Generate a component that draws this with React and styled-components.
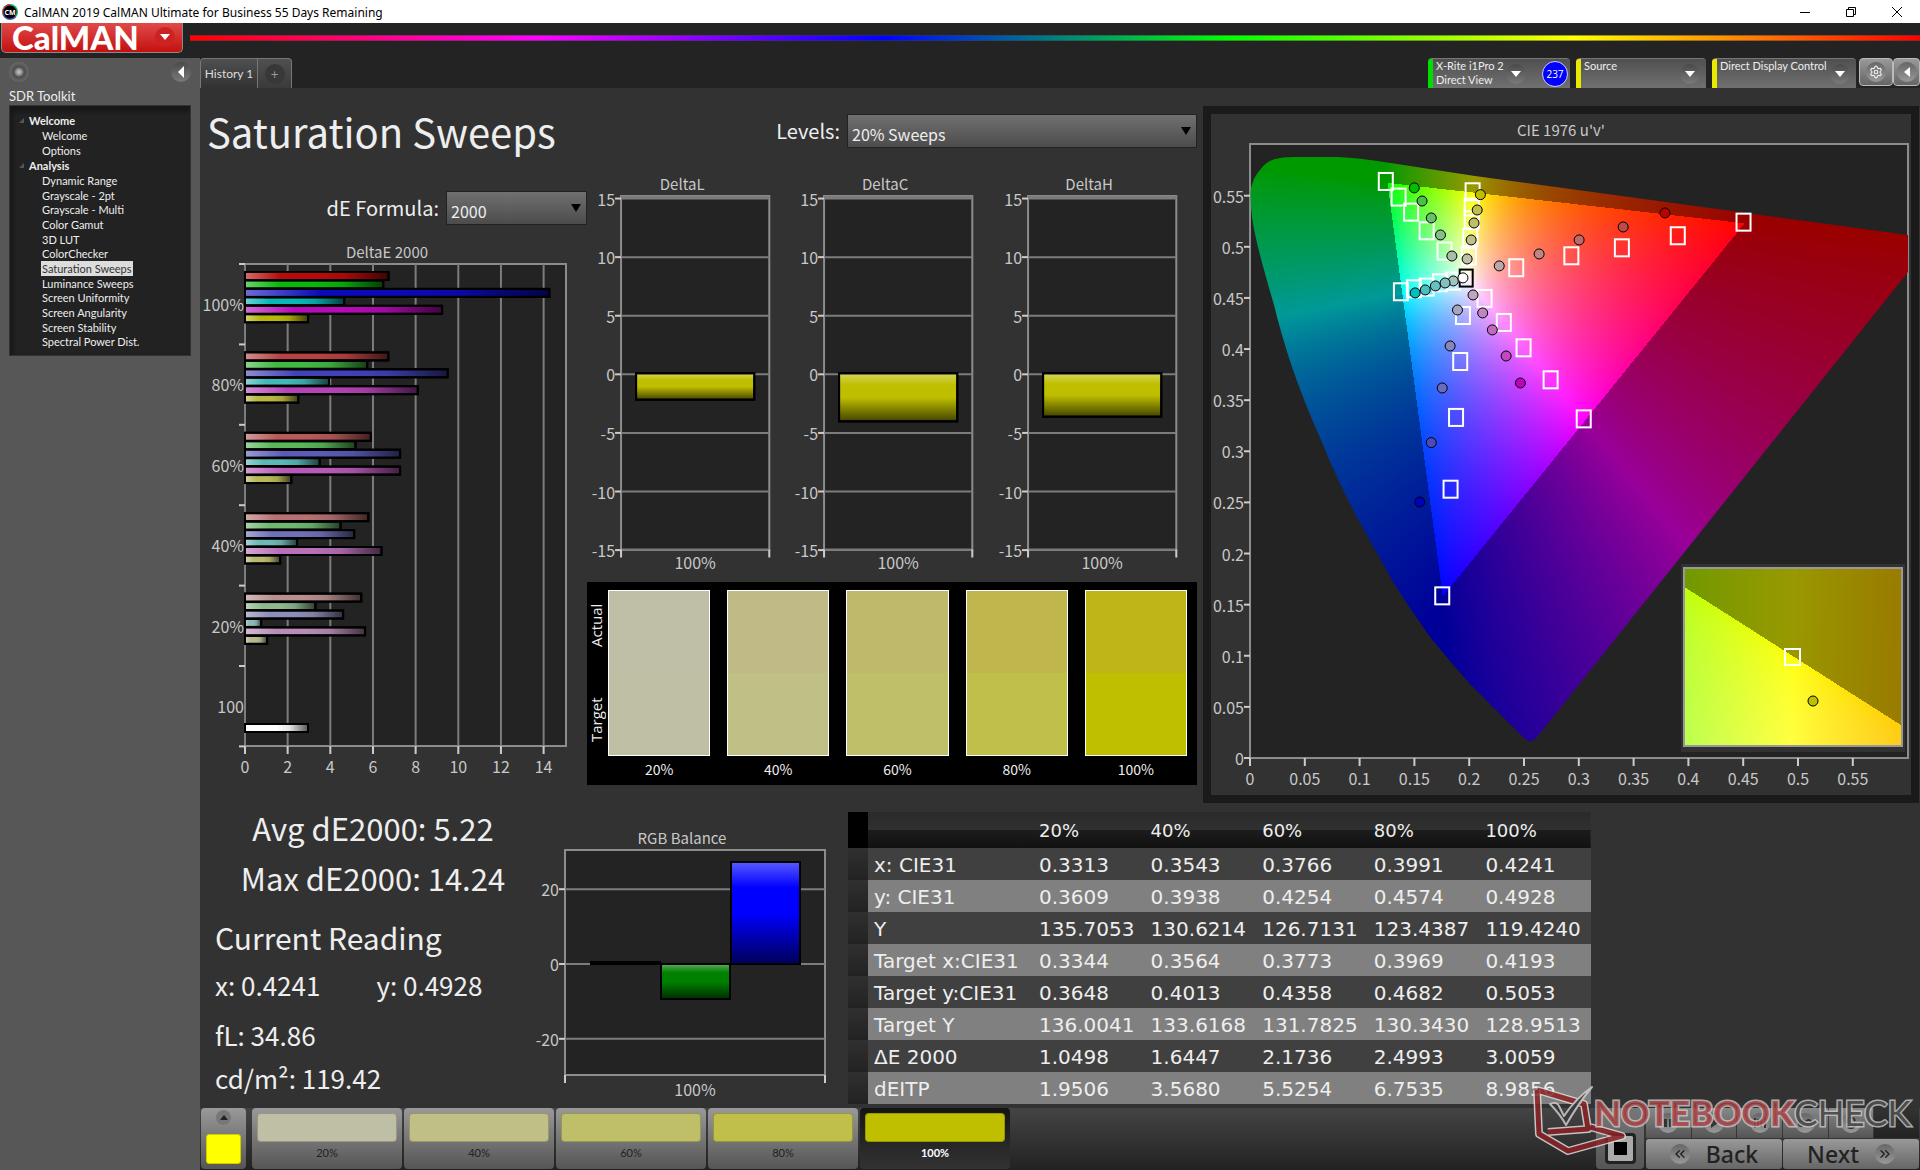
import React, { useEffect, useRef, useState } from "react";
import styled, { createGlobalStyle, css } from "styled-components";
import { Settings, ChevronsLeft, ChevronsRight } from "lucide-react";

const narrow = `"Noto Sans CJK SC", sans-serif`;

const treeData = [
  { title: "Welcome", items: ["Welcome", "Options"] },
  {
    title: "Analysis",
    items: [
      "Dynamic Range",
      "Grayscale - 2pt",
      "Grayscale - Multi",
      "Color Gamut",
      "3D LUT",
      "ColorChecker",
      "Saturation Sweeps",
      "Luminance Sweeps",
      "Screen Uniformity",
      "Screen Angularity",
      "Screen Stability",
      "Spectral Power Dist.",
    ],
  },
];

// red, green, blue, cyan, magenta, yellow
const hues = [
  [1, 0, 0],
  [0, 1, 0],
  [0, 0, 1],
  [0, 1, 1],
  [1, 0, 1],
  [1, 1, 0],
];

const deltaE = [
  { label: "100%", low: 10, values: [6.73, 6.48, 14.27, 4.65, 9.24, 2.96] },
  { label: "80%", low: 66, values: [6.72, 5.73, 9.5, 3.94, 8.1, 2.5] },
  { label: "60%", low: 90, values: [5.9, 5.18, 7.27, 3.5, 7.27, 2.17] },
  { label: "40%", low: 112, values: [5.78, 4.48, 5.12, 2.44, 6.4, 1.65] },
  { label: "20%", low: 142, values: [5.45, 3.3, 4.6, 0.76, 5.63, 1.04] },
];

const deltas = [
  { title: "DeltaL", value: -2.25 },
  { title: "DeltaC", value: -4.1 },
  { title: "DeltaH", value: -3.7 },
];

const swatches = [
  { level: "20%", actual: "#bfbea6", target: "#bfbfa6" },
  { level: "40%", actual: "#bfba86", target: "#bfbf86" },
  { level: "60%", actual: "#bfb96c", target: "#bfbf6a" },
  { level: "80%", actual: "#bfb74d", target: "#bfbf4a" },
  { level: "100%", actual: "#bfb418", target: "#bfbf00" },
];

const tableRows = [
  ["x: CIE31", "0.3313", "0.3543", "0.3766", "0.3991", "0.4241"],
  ["y: CIE31", "0.3609", "0.3938", "0.4254", "0.4574", "0.4928"],
  ["Y", "135.7053", "130.6214", "126.7131", "123.4387", "119.4240"],
  ["Target x:CIE31", "0.3344", "0.3564", "0.3773", "0.3969", "0.4193"],
  ["Target y:CIE31", "0.3648", "0.4013", "0.4358", "0.4682", "0.5053"],
  ["Target Y", "136.0041", "133.6168", "131.7825", "130.3430", "128.9513"],
  ["ΔE 2000", "1.0498", "1.6447", "2.1736", "2.4993", "3.0059"],
  ["dEITP", "1.9506", "3.5680", "5.5254", "6.7535", "8.9856"],
];

// u'v' coordinates, 20% to 100% for each hue
const targets = [
  [[0.2429, 0.48], [0.2932, 0.4917], [0.3393, 0.4995], [0.3903, 0.5113], [0.4503, 0.5246]],
  [[0.1775, 0.4963], [0.1612, 0.5161], [0.147, 0.5344], [0.1356, 0.5491], [0.1239, 0.5644]],
  [[0.1943, 0.4333], [0.1918, 0.3883], [0.188, 0.3336], [0.183, 0.2634], [0.1754, 0.1591]],
  [[0.1855, 0.4669], [0.1733, 0.4653], [0.1612, 0.4611], [0.1495, 0.4594], [0.1377, 0.4565]],
  [[0.214, 0.45], [0.2316, 0.4265], [0.2496, 0.4017], [0.2743, 0.3704], [0.3045, 0.3322]],
  [[0.1997, 0.4914], [0.201, 0.5096], [0.2023, 0.5269], [0.2023, 0.5393], [0.2031, 0.5543]],
];

const readings = [
  [[0.2274, 0.4813], [0.2638, 0.493], [0.3003, 0.5067], [0.3405, 0.5194], [0.3786, 0.5331]],
  [[0.1842, 0.491], [0.1738, 0.5116], [0.1654, 0.5282], [0.157, 0.5448], [0.1499, 0.5576]],
  [[0.1893, 0.4382], [0.1826, 0.403], [0.1754, 0.3619], [0.1654, 0.3085], [0.1549, 0.2504]],
  [[0.1855, 0.4666], [0.178, 0.4646], [0.1692, 0.4617], [0.1599, 0.4578], [0.1507, 0.4549]],
  [[0.2035, 0.4529], [0.2123, 0.4353], [0.2211, 0.4187], [0.2337, 0.3932], [0.2467, 0.3668]],
  [[0.1981, 0.4881], [0.2018, 0.5067], [0.2044, 0.5233], [0.2073, 0.536], [0.2102, 0.551]],
];

const lows = [166, 134, 106, 74, 0];

const locus =
  "M274,594 L221,541 Q198,515 180,493 Q160,465 143,438 L108,375 Q88,338 71,296 Q54,258 42,223 Q31,190 24,161 Q12,120 7,99 Q-1,66 1,44 Q4,32 10,26 Q15,18 25,15 Q33,13 42,13 L88,13 Q110,14 134,18 L225,32 L658,91 L658,128 L287,593 Q280,601 274,594 Z";

const tint = (hue, low, high = 191) =>
  `rgb(${hue.map((c) => (c ? high : low)).join(",")})`;

// brightest displayable colour at a u'v' point, dimmed outside the gamut
const colorAt = (u, v, gamma) => {
  const x = (9 * u) / (4 * v);
  const z = (12 - 3 * u - 20 * v) / (4 * v);
  const rgb = [
    3.2406 * x - 1.5372 - 0.4986 * z,
    -0.9689 * x + 1.8758 + 0.0415 * z,
    0.0557 * x - 0.204 + 1.057 * z,
  ];
  const inside = Math.min(...rgb) >= 0;
  const clipped = rgb.map((c) => Math.max(c, 0));
  const max = Math.max(...clipped);
  return clipped.map((c) => Math.pow(c / max, gamma) * (inside ? 255 : 153));
};

const Chromaticity = ({ width, height, u0, v0, uScale, vScale, gamma, mask }) => {
  const ref = useRef(null);

  useEffect(() => {
    const ctx = ref.current.getContext("2d");
    const image = ctx.createImageData(width, height);
    for (let py = 0; py < height; py++) {
      for (let px = 0; px < width; px++) {
        const [r, g, b] = colorAt(u0 + px / uScale, v0 - py / vScale, gamma);
        const i = (py * width + px) * 4;
        image.data[i] = r;
        image.data[i + 1] = g;
        image.data[i + 2] = b;
        image.data[i + 3] = 255;
      }
    }
    ctx.putImageData(image, 0, 0);
    if (mask) {
      ctx.globalCompositeOperation = "destination-in";
      ctx.fill(new Path2D(mask));
    }
  }, [width, height, u0, v0, uScale, vScale, gamma, mask]);

  return <Canvas ref={ref} width={width} height={height} />;
};

const DeltaEChart = () => {
  const x0 = 45;
  const y0 = 24;
  const unit = 21.33;
  const group = 80.4;
  return (
    <Chart viewBox="0 0 387 550" role="img" aria-label="DeltaE 2000">
      <defs>
        <linearGradient id="shine">
          <stop offset="0" stopColor="#fff" stopOpacity="0.4" />
          <stop offset="0.25" stopColor="#fff" stopOpacity="0" />
          <stop offset="0.5" stopColor="#000" stopOpacity="0" />
          <stop offset="0.7" stopColor="#000" stopOpacity="0.1" />
          <stop offset="1" stopColor="#000" stopOpacity="0.65" />
        </linearGradient>
        <linearGradient id="shineDown" x2="0" y2="1">
          <stop offset="0" stopColor="#fff" stopOpacity="0.35" />
          <stop offset="0.25" stopColor="#fff" stopOpacity="0" />
          <stop offset="0.5" stopColor="#000" stopOpacity="0" />
          <stop offset="1" stopColor="#000" stopOpacity="0.65" />
        </linearGradient>
      </defs>
      <ChartTitle x="187" y="18" $middle>DeltaE 2000</ChartTitle>
      <Plot x={x0} y={y0} width="321" height="482" />
      {[0, 2, 4, 6, 8, 10, 12, 14].map((n) => (
        <g key={n}>
          <Grid d={`M${x0 + n * unit},${y0} v482`} />
          <Tick d={`M${x0 + n * unit},${y0 + 482} v8`} />
          <Label x={x0 + n * unit} y="533" $middle>{n}</Label>
        </g>
      ))}
      {[0, 1, 2, 3, 4, 5, 6].map((n) => (
        <Tick key={n} d={`M${x0},${y0 + n * group} h-6`} />
      ))}
      {deltaE.map((row, g) => (
        <g key={row.label}>
          <Label x={x0 - 1} y={y0 + g * group + 47} $end>{row.label}</Label>
          {row.values.map((value, i) => (
            <g key={i}>
              <Bar
                x={x0}
                y={y0 + g * group + 8 + i * 8.45}
                width={value * unit}
                height="8"
                fill={tint(hues[i], row.low, 184)}
              />
              <Bar
                x={x0}
                y={y0 + g * group + 8 + i * 8.45}
                width={value * unit}
                height="8"
                fill="url(#shine)"
              />
            </g>
          ))}
        </g>
      ))}
      <Label x={x0 - 1} y={y0 + 5 * group + 47} $end>100</Label>
      <Bar x={x0} y="484" width="63" height="8" fill="#fff" />
      <Bar x={x0} y="484" width="63" height="8" fill="url(#shine)" />
    </Chart>
  );
};

const DeltaChart = ({ title, value }) => {
  const zero = 203;
  return (
    <Chart viewBox="0 0 203 404" role="img" aria-label={title}>
      <ChartTitle x="95" y="19" $middle>{title}</ChartTitle>
      <Plot x="34" y="25" width="148" height="353" />
      <Grid d="M34,26 h148" />
      {[15, 10, 5, 0, -5, -10, -15].map((n) => (
        <g key={n}>
          <Grid d={`M34,${zero - n * 11.7} h148`} />
          <Tick d={`M34,${zero - n * 11.7} h-6`} />
          <Label x="28" y={zero - n * 11.7 + 7} $end>{n}</Label>
        </g>
      ))}
      <Tick d="M34,378 v8 M182,378 v8" />
      <Bar x="49" y={zero - 1} width="118" height={-value * 11.7} fill="#bfbf00" />
      <Bar x="49" y={zero - 1} width="118" height={-value * 11.7} fill="url(#shineDown)" />
      <Label x="108" y="397" $middle>100%</Label>
    </Chart>
  );
};

const RgbChart = () => (
  <Chart viewBox="0 0 316 280" role="img" aria-label="RGB Balance">
    <ChartTitle x="158" y="20" $middle>RGB Balance</ChartTitle>
    <Plot x="41" y="26" width="260" height="225" />
    {[20, 0, -20].map((n) => (
      <g key={n}>
        <Grid d={`M41,${140 - n * 3.74} h260`} />
        <Tick d={`M41,${140 - n * 3.74} h-6`} />
        <Label x="35" y={140 - n * 3.74 + 7} $end>{n}</Label>
      </g>
    ))}
    <Tick d="M41,251 v8 M301,251 v8" />
    <Bar x="67" y="138" width="69" height="2" fill="#000" />
    <Bar x="137" y="140" width="69" height="35" fill="#008000" />
    <Bar x="137" y="140" width="69" height="35" fill="url(#shineDown)" />
    <Bar x="207" y="38" width="69" height="102" fill="#00f" />
    <Bar x="207" y="38" width="69" height="102" fill="url(#shineDown)" />
    <Label x="171" y="272" $middle>100%</Label>
  </Chart>
);

const CieChart = () => {
  const sx = (u) => 39 + u * 1096;
  const sy = (v) => 644 - v * 1022.4;
  const ticks = [0, 0.05, 0.1, 0.15, 0.2, 0.25, 0.3, 0.35, 0.4, 0.45, 0.5, 0.55];
  return (
    <Chart viewBox="0 0 700 681" role="img" aria-label="CIE 1976 u'v'">
      <ChartTitle x="350" y="22" $middle>CIE 1976 u'v'</ChartTitle>
      <Plot x="39" y="30" width="658" height="614" />
      {ticks.map((n) => (
        <g key={n}>
          <Tick d={`M${sx(n)},644 v8`} />
          <Tick d={`M39,${sy(n)} h-6`} />
          <Label x={sx(n)} y="671" $middle>{n}</Label>
          <Label x="33" y={sy(n) + 7} $end>{n}</Label>
        </g>
      ))}
      <foreignObject x="39" y="30" width="658" height="614">
        <Chromaticity
          width={658}
          height={614}
          u0={0}
          v0={0.6}
          uScale={1096}
          vScale={1022.4}
          gamma={0.8}
          mask={locus}
        />
      </foreignObject>
      {targets.map((row) =>
        row.map(([u, v]) => (
          <Target key={`${u}-${v}`} x={sx(u) - 7} y={sy(v) - 8} width="14" height="17" />
        ))
      )}
      <Target x={sx(0.1968) - 6} y={sy(0.4699) - 8} width="13" height="17" $black />
      {readings.map((row, h) =>
        row.map(([u, v], i) => (
          <Reading
            key={`${u}-${v}`}
            cx={sx(u)}
            cy={sy(v)}
            rx="5"
            ry="5"
            fill={tint(hues[h], lows[i])}
          />
        ))
      )}
      <Reading cx={sx(0.1943)} cy={sy(0.4696)} rx="5" ry="5" fill="#fff" />
      <rect x="470" y="450" width="224" height="188" fill="#323232" />
      <foreignObject x="473" y="454" width="218" height="178">
        <Chromaticity
          width={218}
          height={178}
          u0={0.1709}
          v0={0.558}
          uScale={3281}
          vScale={17200}
          gamma={0.45}
        />
      </foreignObject>
      <InsetFrame x="473" y="454" width="218" height="178" />
      <Target x="574" y="535" width="15" height="16" />
      <Reading cx="602" cy="587" rx="5" ry="5" fill="#bfbf00" />
    </Chart>
  );
};

const Device = ({ color, lines, width, badge }) => (
  <DeviceTab $width={width} $badge={badge}>
    <Status $color={color} />
    <DeviceName>
      {lines.map((line) => (
        <span key={line}>{line}</span>
      ))}
    </DeviceName>
    <RoundButton aria-label={`${lines[0]} menu`}>
      <Caret />
    </RoundButton>
    {badge && <Badge>{badge}</Badge>}
  </DeviceTab>
);

const Caret = () => (
  <svg width="10" height="6" viewBox="0 0 10 6" aria-hidden="true">
    <path d="M0 0h10L5 6z" fill="#fff" />
  </svg>
);

const Dropdown = ({ id, label, value, width, children }) => (
  <Field>
    <FieldLabel htmlFor={id}>{label}</FieldLabel>
    <SelectWrap $width={width}>
      <Select id={id} defaultValue={value}>
        {children}
      </Select>
      <SelectArrow viewBox="0 0 10 8" aria-hidden="true">
        <path d="M0 0h10L5 8z" fill="#000" />
      </SelectArrow>
    </SelectWrap>
  </Field>
);

const shield = "M37 20 L39 64 L68 81 L122 66 L90 57 M37 20 L84 34 L88 59 L48 62";

const Watermark = () => (
  <WatermarkSvg viewBox="0 0 420 100" aria-hidden="true">
    <g strokeLinejoin="round" opacity="0.85" fill="none">
      <path d={shield} stroke="#ddd" strokeWidth="8" />
      <path d={shield} stroke="#8c2225" strokeWidth="5" />
      <path
        d="M50 34 Q57 31 59 36 L64 46 Q76 28 92 17 Q78 34 66 55 Q60 44 50 34z"
        fill="#3a3a3a"
        stroke="#ccc"
        strokeWidth="2"
      />
    </g>
    <WatermarkText x="94" y="56">
      <tspan fill="#a63a3d">NOTEBOOK</tspan>
      <tspan fill="#333" fontWeight="400">CHECK</tspan>
    </WatermarkText>
  </WatermarkSvg>
);

const App = () => {
  const [page, setPage] = useState("Saturation Sweeps");
  const [level, setLevel] = useState("100%");

  return (
    <Window>
      <GlobalStyle />
      <TitleBar>
        <svg width="16" height="16" viewBox="0 0 16 16" aria-hidden="true">
          <circle cx="8" cy="8" r="8" fill="#2a7" />
          <path d="M8 8V0A8 8 0 0 0 1 11z" fill="#c33" />
          <path d="M8 8L1 11a8 8 0 0 0 13 2z" fill="#63c" />
          <circle cx="8" cy="8" r="6.5" fill="#000" />
          <text x="8" y="11" fontSize="7" fontWeight="700" fill="#fff" textAnchor="middle">CM</text>
        </svg>
        <TitleText>CalMAN 2019 CalMAN Ultimate for Business 55 Days Remaining</TitleText>
        <WindowButton aria-label="Minimize">
          <svg width="12" height="12"><path d="M1 6.5h10" stroke="#000" /></svg>
        </WindowButton>
        <WindowButton aria-label="Restore">
          <svg width="12" height="12" fill="none" stroke="#000">
            <path d="M1.5 3.5h7v7h-7zM3.5 3v-1.5h7v7h-2" />
          </svg>
        </WindowButton>
        <WindowButton aria-label="Close">
          <svg width="12" height="12"><path d="M1 1l10 10M11 1L1 11" stroke="#000" /></svg>
        </WindowButton>
      </TitleBar>

      <Header>
        <Logo>
          CalMAN
          <LogoCaret><Caret /></LogoCaret>
        </Logo>
        <Rainbow />
      </Header>

      <Body>
        <Sidebar>
          <SidebarTop>
            <Knob />
            <RoundButton aria-label="Collapse">
              <svg width="6" height="12"><path d="M6 0v12L0 6z" fill="#fff" /></svg>
            </RoundButton>
          </SidebarTop>
          <SidebarTitle>SDR Toolkit</SidebarTitle>
          <Tree>
            {treeData.map((section) => (
              <li key={section.title}>
                <TreeHeading>
                  <svg width="5" height="5"><path d="M5 0v5H0z" fill="#555" /></svg>
                  {section.title}
                </TreeHeading>
                <TreeList>
                  {section.items.map((item) => (
                    <li key={item}>
                      <TreeLink
                        href="#"
                        $active={item === page}
                        onClick={(e) => {
                          e.preventDefault();
                          setPage(item);
                        }}
                      >
                        {item}
                      </TreeLink>
                    </li>
                  ))}
                </TreeList>
              </li>
            ))}
          </Tree>
        </Sidebar>

        <Main>
          <TabRow>
            <Tab>History 1</Tab>
            <AddTab aria-label="Add tab"><span>+</span></AddTab>
            <Spacer />
            <Device color="#00dd00" lines={["X-Rite i1Pro 2", "Direct View"]} width={142} badge="237" />
            <Device color="#e8e800" lines={["Source"]} width={130} />
            <Device color="#e8e800" lines={["Direct Display Control"]} width={144} />
            <ToolButton aria-label="Settings">
              <ToolCircle><Settings size={14} strokeWidth={2} /></ToolCircle>
            </ToolButton>
            <ToolButton aria-label="Expand" $last>
              <ToolCircle>
                <svg width="6" height="10"><path d="M6 0v10L0 5z" fill="#fff" /></svg>
              </ToolCircle>
            </ToolButton>
          </TabRow>

          <Workspace>
            <TopGrid>
              <div>
                <Title>Saturation Sweeps</Title>
                <Dropdown id="formula" label="dE Formula:" value="2000" width={141}>
                  <option>2000</option>
                  <option>1976</option>
                </Dropdown>
                <DeltaEChart />
              </div>
              <MiddleColumn>
                <Dropdown id="levels" label="Levels:" value="20% Sweeps" width={350}>
                  <option>20% Sweeps</option>
                  <option>25% Sweeps</option>
                </Dropdown>
                <DeltaRow>
                  {deltas.map((delta) => (
                    <DeltaChart key={delta.title} {...delta} />
                  ))}
                </DeltaRow>
                <SwatchPanel>
                  <SwatchSide>
                    <span>Target</span>
                    <span>Actual</span>
                  </SwatchSide>
                  {swatches.map((s) => (
                    <SwatchItem key={s.level}>
                      <SwatchBox $actual={s.actual} $target={s.target} />
                      <span>{s.level}</span>
                    </SwatchItem>
                  ))}
                </SwatchPanel>
              </MiddleColumn>
              <CiePanel>
                <CieChart />
              </CiePanel>
            </TopGrid>

            <BottomGrid>
              <Stats>
                <Summary>Avg dE2000: 5.22</Summary>
                <Summary>Max dE2000: 14.24</Summary>
                <ReadingTitle>Current Reading</ReadingTitle>
                <Readout $gap={10}>
                  <span>x: 0.4241</span>
                  <span>y: 0.4928</span>
                </Readout>
                <Readout $gap={3}>fL: 34.86</Readout>
                <Readout>cd/m²: 119.42</Readout>
              </Stats>
              <RgbWrap>
                <RgbChart />
              </RgbWrap>
              <DataTable>
                <thead>
                  <tr>
                    <Corner />
                    <LabelHead />
                    {swatches.map((s) => (
                      <th key={s.level} scope="col">{s.level}</th>
                    ))}
                  </tr>
                </thead>
                <tbody>
                  {tableRows.map(([name, ...cells]) => (
                    <tr key={name}>
                      <Gutter />
                      <th scope="row">{name}</th>
                      {cells.map((cell) => (
                        <td key={cell}>{cell}</td>
                      ))}
                    </tr>
                  ))}
                </tbody>
              </DataTable>
            </BottomGrid>
          </Workspace>

          <BottomBar>
            <PatternButton aria-label="Pattern">
              <PatternKnob>
                <svg width="8" height="5"><path d="M0 5h8L4 0z" fill="#222" /></svg>
              </PatternKnob>
              <PatternColor />
            </PatternButton>
            {swatches.map((s) => (
              <LevelButton
                key={s.level}
                $active={s.level === level}
                onClick={() => setLevel(s.level)}
              >
                <LevelColor $color={s.target} />
                {s.level}
              </LevelButton>
            ))}
            <Spacer />
            <StopButton aria-label="Stop">
              <StopIcon />
            </StopButton>
            <Transport>
              <TransportRow>
                <TransportButton aria-label="Pause">
                  <ToolCircle><svg width="10" height="8"><path d="M1 0h3v8H1zM6 0h3v8H6z" fill="#333" /></svg></ToolCircle>
                </TransportButton>
                <TransportButton aria-label="Play">
                  <ToolCircle><svg width="10" height="10"><path d="M2 0v10l7-5z" fill="#333" /></svg></ToolCircle>
                </TransportButton>
                <TransportButton aria-label="Step">
                  <ToolCircle><svg width="12" height="10"><path d="M1 0v10M11 0v10M4 1v8M7 1v8" stroke="#333" strokeWidth="2" /></svg></ToolCircle>
                </TransportButton>
                <TransportButton aria-label="Continuous">
                  <ToolCircle><svg width="14" height="8"><path d="M7 4C5 0 1 0 1 4s4 4 6 0 6-4 6 0-4 4-6 0z" fill="none" stroke="#333" strokeWidth="2" /></svg></ToolCircle>
                </TransportButton>
                <TransportButton aria-label="Refresh">
                  <ToolCircle><svg width="12" height="12"><path d="M10 4A4 4 0 0 0 2 6M2 8a4 4 0 0 0 8-2" fill="none" stroke="#333" strokeWidth="2" /></svg></ToolCircle>
                </TransportButton>
                <TransportButton aria-label="Record" $dark />
              </TransportRow>
              <TransportRow>
                <NavButton>
                  <ToolCircle><ChevronsLeft size={16} color="#222" /></ToolCircle>
                  Back
                </NavButton>
                <NavButton>
                  Next
                  <ToolCircle><ChevronsRight size={16} color="#222" /></ToolCircle>
                </NavButton>
              </TransportRow>
            </Transport>
            <Watermark />
          </BottomBar>
        </Main>
      </Body>
    </Window>
  );
};

const GlobalStyle = createGlobalStyle`
  * {
    box-sizing: border-box;
  }
  body {
    margin: 0;
    background: #323232;
    color: #eee;
    font-family: Lato, sans-serif;
  }
  button {
    border: 0;
    padding: 0;
    font-family: inherit;
    color: inherit;
    cursor: pointer;
  }
  ul {
    list-style: none;
    margin: 0;
    padding: 0;
  }
`;

const Window = styled.div`
  display: flex;
  flex-direction: column;
  min-height: 100vh;
`;

const TitleBar = styled.div`
  display: flex;
  align-items: center;
  height: 23px;
  padding-left: 2px;
  background: #fff;
  color: #000;
  font-family: "Noto Sans", sans-serif;
  font-size: 12px;
  line-height: 16px;
`;

const TitleText = styled.span`
  flex: 1;
  margin: 2px 0 0 6px;
`;

const WindowButton = styled.button`
  display: grid;
  place-items: center;
  width: 46px;
  height: 20px;
  background: none;
`;

const Header = styled.header`
  display: flex;
  align-items: flex-start;
  gap: 7px;
  height: 35px;
  background: #232323;
`;

const Logo = styled.button`
  display: flex;
  align-items: center;
  justify-content: space-between;
  width: 182px;
  height: 30px;
  margin-left: 1px;
  padding: 0 7px 2px 10px;
  border: 1px solid #8a8a8a;
  border-top: 0;
  border-radius: 0 0 5px 5px;
  background: linear-gradient(#e04a4a, #c41010);
  color: #fff;
  font-family: Lato, sans-serif;
  font-size: 33px;
  font-weight: 900;
  line-height: 28px;
`;

const LogoCaret = styled.span`
  display: grid;
  place-items: center;
  width: 20px;
  height: 20px;
  border-radius: 50%;
  background: #c22;
`;

const Rainbow = styled.div`
  flex: 1;
  height: 6px;
  margin-top: 12px;
  border: solid rgba(60, 60, 60, 0.5);
  border-width: 1px 0;
  background: linear-gradient(90deg, red, magenta, blue, lime, yellow, red);
`;

const Body = styled.div`
  display: flex;
  flex: 1;
`;

const Sidebar = styled.aside`
  flex: 0 0 200px;
  padding: 3px 9px;
  background: #575757;
`;

const SidebarTop = styled.div`
  display: flex;
  align-items: center;
  justify-content: space-between;
  height: 22px;
`;

const round = css`
  display: grid;
  place-items: center;
  width: 20px;
  height: 20px;
  border-radius: 50%;
`;

const Knob = styled.span`
  ${round}
  background: radial-gradient(circle, #ccc 0, #777 4px, #4c4c4c 5px, #6a6a6a 10px);
`;

const RoundButton = styled.button`
  ${round}
  flex: none;
  background: linear-gradient(#4a4a4a, #7a7a7a);
`;

const SidebarTitle = styled.div`
  height: 22px;
  font-size: 13px;
  line-height: 26px;
`;

const Tree = styled.ul`
  padding: 7px 0 6px 9px;
  border: 1px solid #333;
  background: linear-gradient(#181818, #222 10px);
  box-shadow: inset 3px 3px 4px #181818;
  font-size: 11px;
`;

const TreeHeading = styled.div`
  display: flex;
  align-items: center;
  gap: 5px;
  height: 15px;
  font-weight: 700;
`;

const TreeList = styled.ul`
  padding-left: 22px;
  line-height: 15px;

  li:nth-child(3n) {
    line-height: 14px;
  }
`;

const TreeLink = styled.a`
  display: inline-block;
  padding: 0 1px;
  color: ${(props) => (props.$active ? "#333" : "#eee")};
  background: ${(props) => (props.$active ? "#ddd" : "none")};
  text-decoration: none;
`;

const Main = styled.main`
  display: flex;
  flex: 1;
  flex-direction: column;
  min-width: 0;
`;

const TabRow = styled.div`
  display: flex;
  height: 30px;
  background: #232323;
`;

const Tab = styled.button`
  width: 58px;
  border: 1px solid #777;
  border-bottom: 0;
  border-radius: 4px 0 0 0;
  background: linear-gradient(#505050, #323232);
  color: #ddd;
  font-size: 12px;
`;

const AddTab = styled.button`
  display: grid;
  place-items: center;
  width: 34px;
  border: 1px solid #777;
  border-width: 1px 1px 0 0;
  border-radius: 0 4px 0 0;
  background: linear-gradient(#505050, #3a3a3a);
  color: #999;

  span {
    ${round}
    background: #383838;
  }
`;

const Spacer = styled.div`
  flex: 1;
`;

const DeviceTab = styled.div`
  display: flex;
  align-items: center;
  flex: none;
  width: ${(props) => props.$width}px;
  margin-right: 6px;
  padding-right: ${(props) => (props.$badge ? 2 : 6)}px;
  border-top: 1px solid #777;
  border-radius: 4px 4px 0 0;
  background: linear-gradient(#505050, #707070);
  font-size: 11px;
  line-height: 14px;
`;

const Status = styled.span`
  align-self: stretch;
  flex: none;
  width: 5px;
  margin-right: 3px;
  border-radius: 3px 0 0 0;
  background: ${(props) => props.$color};
`;

const DeviceName = styled.div`
  display: flex;
  flex: 1;
  flex-direction: column;
  align-self: flex-start;
  min-width: 0;
  white-space: nowrap;
`;

const Badge = styled.span`
  display: grid;
  place-items: center;
  flex: none;
  width: 26px;
  height: 26px;
  margin-left: 16px;
  border: 1px solid #ccf;
  border-radius: 50%;
  background: #00f;
  color: #fff;
  font-family: "Open Sans", sans-serif;
  font-size: 10px;
`;

const ToolButton = styled.button`
  display: grid;
  place-items: center;
  flex: none;
  width: ${(props) => (props.$last ? 27 : 34)}px;
  height: 28px;
  margin-left: ${(props) => (props.$last ? 0 : -3)}px;
  border: 1px solid #bbb;
  border-radius: 4px;
  background: linear-gradient(#999, #666);
`;

const ToolCircle = styled.span`
  ${round}
  background: linear-gradient(#666, #999);
`;

const Workspace = styled.div`
  flex: 1;
  padding-right: 1px;
`;

const TopGrid = styled.div`
  display: grid;
  grid-template-columns: 387fr 616fr 716fr;
  align-items: start;

  > * {
    min-width: 0;
  }
`;

const Title = styled.h1`
  margin: 0;
  padding: 5px 0 22px 7px;
  font-family: ${narrow};
  font-size: 40px;
  font-weight: 400;
  line-height: 76px;
  white-space: nowrap;
`;

const Field = styled.div`
  display: flex;
  align-items: center;
  justify-content: flex-end;
  gap: 7px;
  height: 34px;
  margin-bottom: 15px;
`;

const FieldLabel = styled.label`
  font-family: ${narrow};
  font-size: 20px;
  line-height: 34px;
`;

const SelectWrap = styled.div`
  position: relative;
  flex: 0 0 ${(props) => props.$width}px;
`;

const Select = styled.select`
  appearance: none;
  width: 100%;
  height: 34px;
  padding: 5px 4px 0;
  border: 1px solid #222;
  border-radius: 0;
  background: linear-gradient(#707070, #4c4c4c);
  color: #eee;
  font-family: ${narrow};
  font-size: 16px;
`;

const SelectArrow = styled.svg`
  position: absolute;
  top: 13px;
  right: 6px;
  width: 10px;
  height: 8px;
  pointer-events: none;
`;

const Chart = styled.svg`
  display: block;
  width: 100%;
  min-width: 0;
`;

const Canvas = styled.canvas`
  display: block;
`;

const Plot = styled.rect`
  fill: #232323;
  stroke: #8c8c8c;
  stroke-width: 2;
`;

const Grid = styled.path`
  fill: none;
  stroke: #7c7c7c;
  stroke-width: 2;
`;

const Tick = styled.path`
  fill: none;
  stroke: #ccc;
  stroke-width: 2;
`;

const Label = styled.text`
  fill: #c8c8c8;
  font-family: ${narrow};
  font-size: 16px;
  text-anchor: ${(props) => (props.$middle ? "middle" : props.$end ? "end" : "start")};
`;

const ChartTitle = styled(Label)`
  font-size: 15px;
`;

const Bar = styled.rect`
  stroke: #000;
  stroke-width: 2;
`;

const Target = styled.rect`
  fill: none;
  stroke: ${(props) => (props.$black ? "#000" : "#fff")};
  stroke-width: 2;
`;

const Reading = styled.ellipse`
  stroke: #000;
  stroke-width: 1;
`;

const InsetFrame = styled.rect`
  fill: none;
  stroke: #999;
  stroke-width: 2;
`;

const MiddleColumn = styled.div`
  padding: 26px 6px 0 0;
`;

const DeltaRow = styled.div`
  display: grid;
  grid-template-columns: repeat(3, 1fr);
  margin-top: 23px;
  margin-bottom: 6px;
`;

const SwatchPanel = styled.div`
  display: flex;
  gap: 17px;
  padding: 8px 10px 3px 0;
  background: #000;
`;

const SwatchSide = styled.div`
  display: flex;
  justify-content: space-between;
  flex: 0 0 21px;
  height: 166px;
  margin-right: -17px;
  padding: 14px 0;
  writing-mode: vertical-rl;
  transform: rotate(180deg);
  font-family: "Open Sans", sans-serif;
  font-size: 15px;
  line-height: 19px;
`;

const SwatchItem = styled.div`
  flex: 1;
  font-family: ${narrow};
  font-size: 14px;
  line-height: 26px;
  text-align: center;
`;

const SwatchBox = styled.div`
  height: 166px;
  border: 1px solid #fff;
  background: linear-gradient(${(props) => props.$actual} 50%, ${(props) => props.$target} 50%);
`;

const CiePanel = styled.section`
  margin-top: 18px;
  border: 8px solid #1a1a1a;
`;

const BottomGrid = styled.div`
  display: grid;
  grid-template-columns: 324fr 316fr 1079fr;
  align-items: start;

  > * {
    min-width: 0;
  }
`;

const Stats = styled.section`
  font-family: ${narrow};
  white-space: nowrap;
`;

const Summary = styled.div`
  padding-left: 22px;
  font-size: 31px;
  line-height: 50px;
  text-align: center;
`;

const ReadingTitle = styled.h2`
  margin: 14px 0 8px;
  padding-left: 15px;
  font-size: 30px;
  font-weight: 400;
  line-height: 40px;
`;

const Readout = styled.div`
  display: flex;
  gap: 56px;
  margin-bottom: ${(props) => props.$gap || 0}px;
  padding-left: 15px;
  font-size: 26px;
  line-height: 40px;
`;

const RgbWrap = styled.div`
  padding-top: 21px;
`;

const DataTable = styled.table`
  width: 743px;
  margin: 9px 0 3px 8px;
  border-collapse: collapse;
  table-layout: fixed;
  font-family: "DejaVu Sans", sans-serif;
  font-size: 20px;
  line-height: 20px;

  th,
  td {
    height: 32px;
    padding: 1px 0 0 6px;
    font-weight: 400;
    text-align: left;
    white-space: nowrap;
  }
  thead tr {
    height: 36px;
    background: linear-gradient(#2a2a2a, #303030 50%, #1c1c1c 50%, #111);
  }
  thead th {
    font-size: 18px;
  }
  tbody tr {
    background: #404040;
  }
  tbody tr:nth-child(even) {
    background: #808080;
  }
`;

const Corner = styled.td`
  width: 20px;
  background: #000;
`;

const LabelHead = styled.td`
  width: 165px;
`;

const Gutter = styled.td`
  background: linear-gradient(#303030, #222);
`;

const BottomBar = styled.footer`
  position: relative;
  display: flex;
  gap: 2px;
  height: 62px;
  padding: 0 1px;
  background: linear-gradient(#444, #222);
`;

const PatternButton = styled.button`
  display: flex;
  flex-direction: column;
  align-items: center;
  justify-content: space-between;
  width: 45px;
  height: 61px;
  margin-right: 4px;
  padding: 2px 0 5px;
  border-radius: 4px;
  background: linear-gradient(#999, #555);
`;

const PatternKnob = styled.span`
  display: grid;
  place-items: center;
  width: 15px;
  height: 15px;
  border-radius: 50%;
  background: #777;
`;

const PatternColor = styled.span`
  width: 35px;
  height: 30px;
  border: 1px solid #cc0;
  border-radius: 3px;
  background: #ff0;
`;

const LevelButton = styled.button`
  display: flex;
  flex-direction: column;
  align-items: center;
  width: 150px;
  height: 61px;
  padding: 5px;
  border-radius: 4px;
  background: ${(props) =>
    props.$active ? "linear-gradient(#151515, #333)" : "linear-gradient(#999, #555)"};
  color: ${(props) => (props.$active ? "#fff" : "#222")};
  font-size: 11px;
  font-weight: ${(props) => (props.$active ? 700 : 400)};
  line-height: 22px;
`;

const LevelColor = styled.span`
  width: 100%;
  height: 36px;
  border: 1px solid rgba(0, 0, 0, 0.2);
  border-radius: 4px;
  background: ${(props) => props.$color};
`;

const StopButton = styled.button`
  display: grid;
  place-items: center;
  align-content: end;
  width: 48px;
  height: 61px;
  padding-bottom: 5px;
  border-radius: 4px;
  background: linear-gradient(#777, #555);
`;

const StopIcon = styled.span`
  width: 31px;
  height: 31px;
  border: 3px solid #222;
  border-radius: 4px;
  background: #000;
  box-shadow: inset 0 0 0 6px #aaa;
`;

const Transport = styled.div`
  display: flex;
  flex-direction: column;
  gap: 1px;
  width: 273px;
`;

const TransportRow = styled.div`
  display: flex;
  gap: 1px;
  height: 30px;
`;

const TransportButton = styled.button`
  display: grid;
  place-items: center;
  flex: 1;
  background: ${(props) =>
    props.$dark ? "linear-gradient(#333, #222)" : "linear-gradient(#888, #555)"};
`;

const NavButton = styled.button`
  display: flex;
  align-items: center;
  justify-content: center;
  gap: 16px;
  flex: 1;
  border-radius: 3px;
  background: linear-gradient(#999, #666);
  color: #222;
  font-family: "Noto Sans", sans-serif;
  font-size: 23px;
  font-weight: 500;
  line-height: 30px;
`;

const WatermarkSvg = styled.svg`
  position: absolute;
  right: 0;
  bottom: 0;
  width: 420px;
  height: 100px;
  pointer-events: none;
`;

const WatermarkText = styled.text`
  fill-opacity: 0.8;
  stroke: #ccc;
  stroke-opacity: 0.8;
  stroke-width: 3;
  paint-order: stroke;
  font-family: Lato, sans-serif;
  font-size: 35px;
  font-weight: 900;
`;

export default App;
